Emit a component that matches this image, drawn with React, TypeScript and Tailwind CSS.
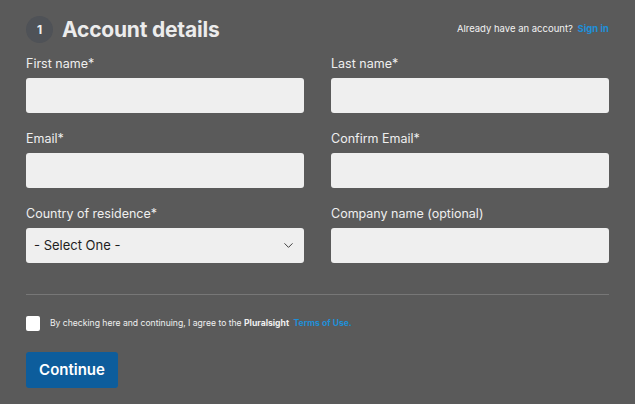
import { ChevronDown } from "lucide-react";

const font = { fontFamily: "Inter, 'Noto Sans', sans-serif" };

function Field({ label, select }: { label: string; select?: boolean }) {
  return (
    <div className="flex flex-col">
      <label className="mb-[6px] text-[12.5px] leading-[16px] text-[#efefef]">
        {label}
      </label>
      {select ? (
        <div className="flex h-[35px] items-center justify-between rounded-[3px] bg-[#efefef] pl-[8px] pr-[8px]">
          <span className="text-[13px] text-[#1e1e1e]">- Select One -</span>
          <ChevronDown size={15} strokeWidth={1.5} className="text-[#333]" />
        </div>
      ) : (
        <input
          type="text"
          className="h-[35px] w-full rounded-[3px] bg-[#efefef] px-2 outline-none"
        />
      )}
    </div>
  );
}

export default function App() {
  return (
    <div
      className="min-h-[404px] w-full bg-[#5a5a5a] px-[26px] pt-[16px]"
      style={font}
    >
      <div className="flex h-[27px] items-center justify-between">
        <div className="flex items-center gap-[9px]">
          <div className="flex h-[27px] w-[27px] items-center justify-center rounded-full bg-[#4f5257] text-[12px] font-bold text-[#f2f2f2]">
            1
          </div>
          <h1 className="text-[21px] leading-[27px] font-bold tracking-[-0.2px] text-[#ececec]">
            Account details
          </h1>
        </div>
        <div className="text-[9.5px] text-[#f2f2f2]">
          Already have an account?{" "}
          <span className="ml-[2px] font-bold text-[#1f8fd8]">Sign in</span>
        </div>
      </div>

      <div className="mt-[13px] grid grid-cols-2 gap-x-[27px] gap-y-[18px]">
        <Field label="First name*" />
        <Field label="Last name*" />
        <Field label="Email*" />
        <Field label="Confirm Email*" />
        <Field label="Country of residence*" select />
        <Field label="Company name (optional)" />
      </div>

      <div className="mt-[31px] h-px bg-[#777]" />

      <div className="mt-[21px] flex items-center gap-[10px]">
        <div className="h-[15px] w-[14px] rounded-[2px] bg-white" />
        <p className="text-[8.6px] text-[#f0f0f0]">
          By checking here and continuing, I agree to the{" "}
          <span className="font-bold">Pluralsight</span>{" "}
          <span className="ml-[2px] font-bold text-[#1f8fd8]">Terms of Use.</span>
        </p>
      </div>

      <button className="mt-[21px] flex h-[36px] w-[92px] items-center justify-center rounded-[3px] bg-[#0d5d9c] text-[15px] font-semibold text-white">
        Continue
      </button>
    </div>
  );
}
